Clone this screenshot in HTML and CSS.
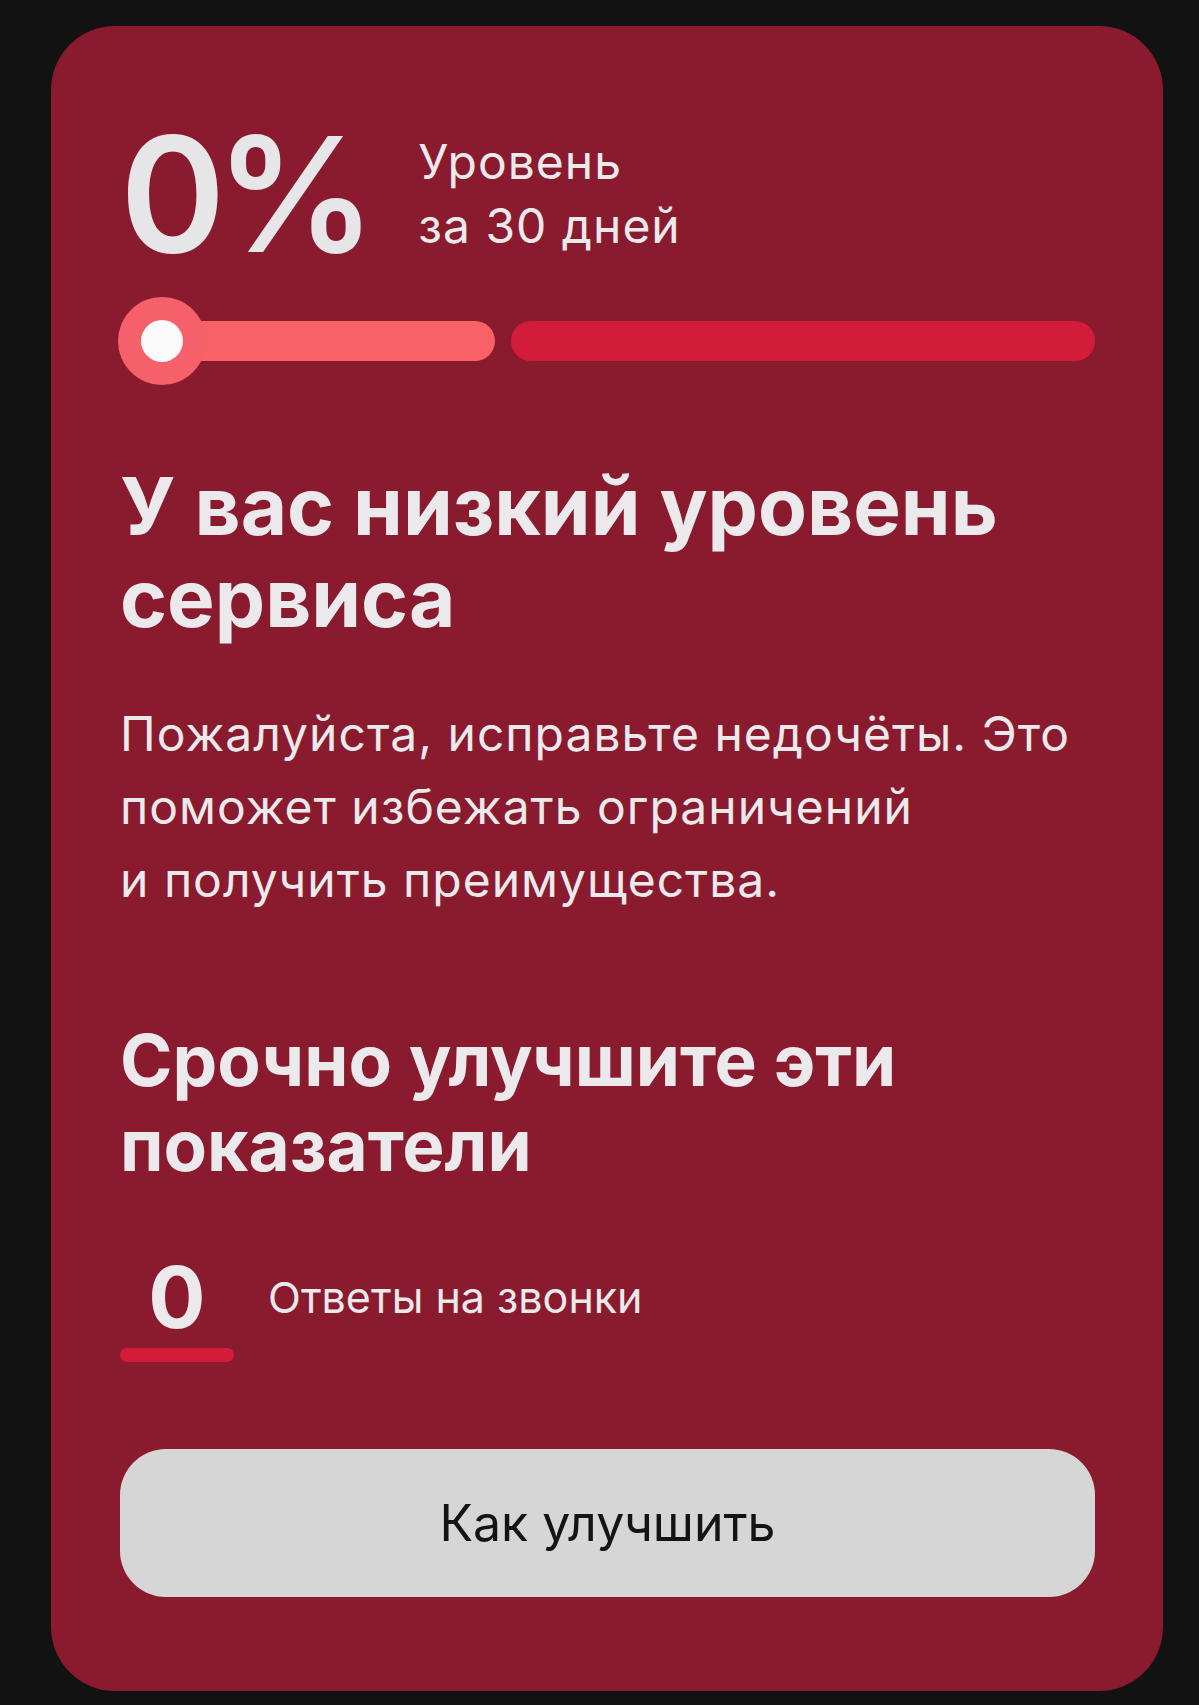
FILE: index.html
```html
<!DOCTYPE html>
<html lang="ru">
<head>
<meta charset="utf-8">
<title>Уровень сервиса</title>
<link rel="stylesheet" href="styles.css">
</head>
<body>
<section class="card">
  <div class="score">
    <div class="score-value">0%</div>
    <div class="score-label">Уровень<br>за 30 дней</div>
  </div>

  <div class="meter">
    <div class="meter-seg meter-seg--low"></div>
    <div class="meter-seg meter-seg--high"></div>
    <div class="meter-knob"><span class="meter-dot"></span></div>
  </div>

  <h2 class="title">У вас низкий уровень сервиса</h2>
  <p class="text">Пожалуйста, исправьте недочёты. Это поможет избежать ограничений и&nbsp;получить преимущества.</p>

  <h2 class="title title--second">Срочно улучшите эти показатели</h2>

  <div class="metric">
    <div class="metric-value">
      <span class="metric-num">0</span>
      <span class="metric-bar"></span>
    </div>
    <span class="metric-name">Ответы на звонки</span>
  </div>

  <button class="action" type="button">Как улучшить</button>
</section>
</body>
</html>
```

FILE: styles.css
```css
html, body {
  margin: 0;
  padding: 0;
  background: #121212;
}

body {
  font-family: "Inter", "Noto Sans", sans-serif;
  color: #ebe9ec;
  padding-top: 26px;
}

.card {
  box-sizing: border-box;
  width: 1112px;
  margin-left: 51px;
  padding: 88px 68px 94px 69px;
  background: #8a1a2d;
  border-radius: 64px;
}

/* big percentage + caption */
.score {
  display: flex;
  align-items: center;
  gap: 52px;
  height: 160px;
}

.score-value {
  font-size: 160px;
  line-height: 160px;
  font-weight: 600;
  letter-spacing: -10px;
  color: #e6e5e7;
}

.score-label {
  font-size: 48px;
  line-height: 64px;
  font-weight: 400;
  letter-spacing: 1px;
}

/* two-part level meter */
.meter {
  position: relative;
  display: flex;
  align-items: center;
  gap: 16px;
  height: 88px;
  margin-top: 23px;
}

.meter-seg {
  height: 40px;
  border-radius: 20px;
}

.meter-seg--low {
  width: 375px;
  background: #f86165;
}

.meter-seg--high {
  flex: 1;
  background: #d21c3a;
}

.meter-knob {
  position: absolute;
  left: -2px;
  top: 0;
  width: 88px;
  height: 88px;
  border-radius: 50%;
  background: #f6606a;
  display: flex;
  align-items: center;
  justify-content: center;
}

.meter-dot {
  width: 42px;
  height: 42px;
  border-radius: 50%;
  background: #fbfafb;
}

.title {
  margin: 75px 0 0;
  font-size: 80px;
  line-height: 92px;
  font-weight: 700;
}

.title--second {
  margin-top: 102px;
  font-size: 71px;
  line-height: 85px;
}

.text {
  margin: 53px 0 0;
  font-size: 48px;
  line-height: 73px;
  font-weight: 400;
  letter-spacing: 1px;
}

/* indicator row */
.metric {
  display: flex;
  align-items: flex-start;
  gap: 34px;
  margin-top: 67px;
}

.metric-value {
  width: 114px;
  display: flex;
  flex-direction: column;
  align-items: center;
  gap: 8px;
}

.metric-num {
  font-size: 85px;
  line-height: 85px;
  font-weight: 700;
}

.metric-bar {
  width: 114px;
  height: 14px;
  border-radius: 7px;
  background: #d21c3a;
}

.metric-name {
  font-size: 43px;
  line-height: 85px;
  font-weight: 400;
}

.action {
  display: flex;
  align-items: center;
  justify-content: center;
  width: 100%;
  height: 148px;
  margin-top: 87px;
  border: 0;
  border-radius: 46px;
  background: #d6d6d6;
  color: #141414;
  font-family: inherit;
  font-size: 50px;
  font-weight: 400;
}
```
